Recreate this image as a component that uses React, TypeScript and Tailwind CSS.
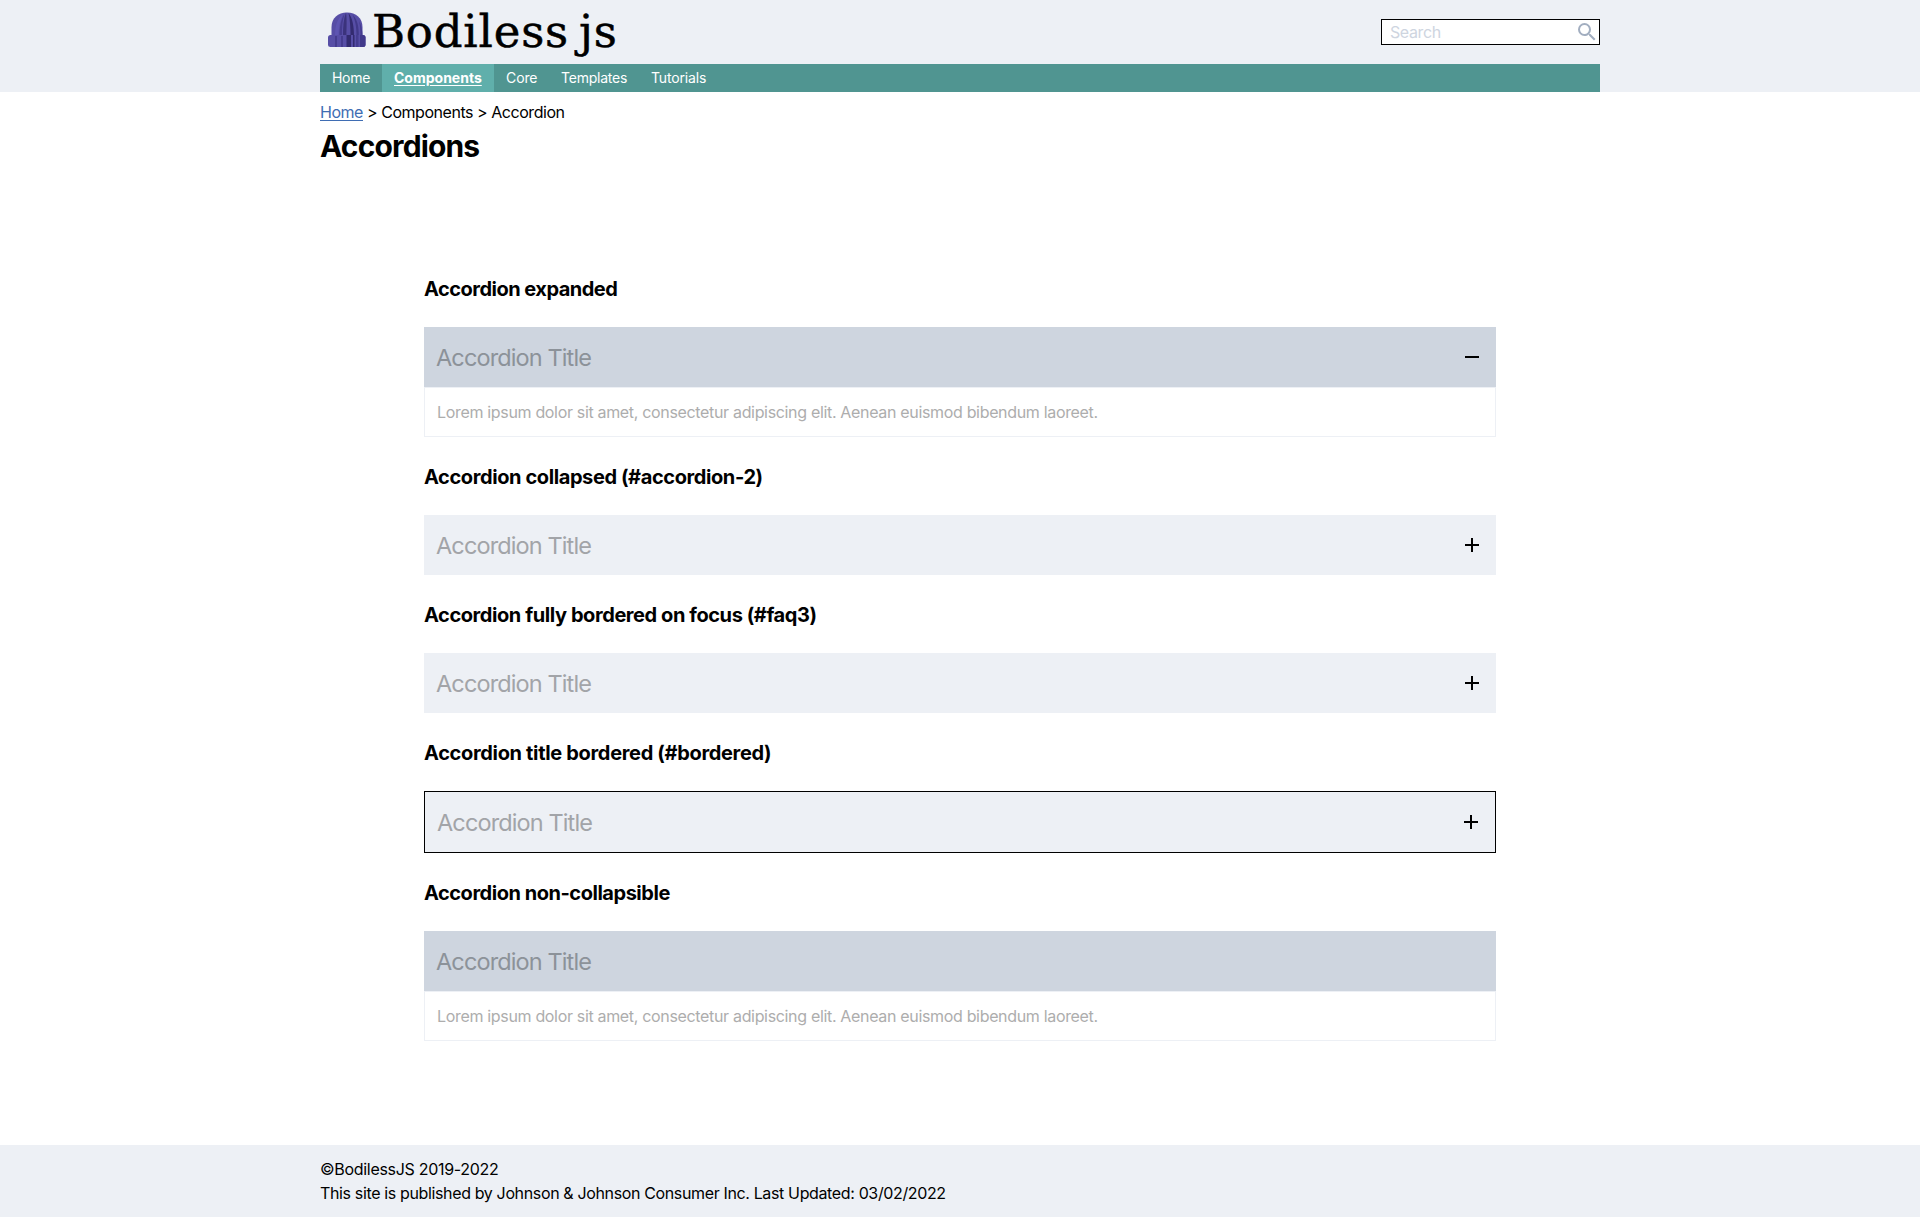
import { MdAdd, MdRemove, MdSearch } from "react-icons/md";

const navItems = [
  { label: "Home", className: "w-[62px] tracking-[-0.3px]" },
  { label: "Components", className: "w-[112px] bg-[#60afab] font-bold underline underline-offset-2" },
  { label: "Core", className: "w-[55px] tracking-[-0.1px]" },
  { label: "Templates", className: "w-[90px] tracking-[-0.22px]" },
  { label: "Tutorials", className: "w-[79px] tracking-[-0.16px]" },
];

const lorem =
  "Lorem ipsum dolor sit amet, consectetur adipiscing elit. Aenean euismod bibendum laoreet.";

type AccordionProps = {
  heading: string;
  headingClass: string;
  open?: boolean;
  bordered?: boolean;
  fixed?: boolean;
};

const accordions: AccordionProps[] = [
  { heading: "Accordion expanded", headingClass: "tracking-[-0.51px]", open: true },
  { heading: "Accordion collapsed (#accordion-2)", headingClass: "tracking-[-0.4px]" },
  { heading: "Accordion fully bordered on focus (#faq3)", headingClass: "tracking-[-0.42px]" },
  { heading: "Accordion title bordered (#bordered)", headingClass: "tracking-[-0.33px]", bordered: true },
  { heading: "Accordion non-collapsible", headingClass: "tracking-[-0.47px]", open: true, fixed: true },
];

function Beanie() {
  return (
    <svg className="mt-[12px] ml-[8px] h-[36px] w-[38px] shrink-0" viewBox="0 0 38 36">
      <path d="M3.500 24V15C3.500 6 10 .4 19 .4S34.500 6 34.500 15v9z" fill="#574ea6" />
      <path d="M7 24c0-10 2-17 8-22-3 6-4.500 13-4.500 22z" fill="#5e55b2" />
      <path d="M15 24c0-9 .5-17 3-23.500 1 6 .6 15 .4 23.500z" fill="#3b337c" />
      <path d="M11.500 24c0-9 1.500-17 5-22-2 6-2.600 13-2.600 22z" fill="#453c8f" />
      <path d="M20.500 1c4 5 5.500 13 5.500 23h-3.500C22.500 15 22 7 20.500 1z" fill="#332b70" />
      <path d="M24.500 2.500c5 5 6.300 12 6.300 21.500h-2.300c0-9-1-15-4-21.500z" fill="#41398a" />
      <path d="M31 9c2 4 3.500 8 3.500 15h-2C32.500 18 32 13 31 9z" fill="#453c8f" />
      <rect x="0" y="23" width="37.500" height="12" rx="2.500" fill="#574ea6" />
      <path d="M7 24h2v11H7zM13 24h2v11h-2zM28 23h2.500v12H28z" fill="#453c8f" />
      <path d="M18.500 23h4.500v12h-4.500zM25 23h1.500v12H25z" fill="#332b70" />
      <path d="M32 23h3a2.500 2.500 0 0 1 2.500 2.500v7A2.500 2.500 0 0 1 35 35h-3z" fill="#41398a" />
    </svg>
  );
}

function Accordion({ heading, headingClass, open, bordered, fixed }: AccordionProps) {
  return (
    <section>
      <h3 className={`mt-[25px] mb-[23px] text-[20px] leading-[30px] font-bold ${headingClass}`}>{heading}</h3>
      <div
        className={`flex items-center justify-between px-3 ${
          bordered ? "h-[62px] border border-black" : "h-[60px]"
        } ${open ? "bg-[#ced5df]" : "bg-[#edf0f5]"}`}
      >
        <span
          className={`pt-[2px] text-[23.500px] leading-9 tracking-[-0.88px] ${open ? "text-[#8c9299]" : "text-[#a2a4a8]"}`}
        >
          Accordion Title
        </span>
        {!fixed && (open ? <MdRemove size={24} /> : <MdAdd size={24} />)}
      </div>
      {open && (
        <div className="border border-[#edf0f5] p-3 text-base leading-6 tracking-[-0.33px] text-[#adadad]">
          {lorem}
        </div>
      )}
    </section>
  );
}

export default function App() {
  return (
    <div className="flex h-[1217px] flex-col bg-white font-['Inter',sans-serif] text-black">
      <header className="bg-[#edf0f5]">
        <div className="mx-auto w-[1280px]">
          <div className="flex h-16 justify-between">
            <div className="flex">
              <Beanie />
              <span className="ml-[6px] pt-[2px] font-['DejaVu_Serif',serif] text-[45px] leading-[60px] tracking-[0.8px] whitespace-nowrap [word-spacing:-5px] [-webkit-text-stroke:0.5px_black]">
                Bodiless js
              </span>
            </div>
            <div className="mt-[19px] flex h-[26px] w-[219px] items-center justify-between border border-black bg-white pl-2 text-base tracking-[-0.4px] text-[#ced5df]">
              <span>Search</span>
              <MdSearch size={24} className="shrink-0 text-[#a2aec0]" />
            </div>
          </div>
          <nav className="flex h-7 bg-[#509591]">
            {navItems.map((item) => (
              <a
                key={item.label}
                className={`flex items-center px-3 text-sm whitespace-nowrap text-white ${item.className}`}
              >
                {item.label}
              </a>
            ))}
          </nav>
        </div>
      </header>

      <main className="mx-auto w-[1280px] grow">
        <div className="mt-2 text-base leading-6 tracking-[-0.46px]">
          <a className="text-[#3f6db3] underline underline-offset-2">Home</a> &gt; Components &gt; Accordion
        </div>
        <h1 className="text-[30px] leading-[45px] font-bold tracking-[-0.85px]">Accordions</h1>
        <div className="mx-auto mt-[105px] w-[1072px]">
          {accordions.map((item) => (
            <Accordion key={item.heading} {...item} />
          ))}
        </div>
      </main>

      <footer className="h-[72px] bg-[#edf0f5]">
        <div className="mx-auto w-[1280px] pt-3 text-base leading-6">
          <p className="tracking-[-0.3px]">©BodilessJS 2019-2022</p>
          <p className="tracking-[-0.36px]">
            This site is published by Johnson &amp; Johnson Consumer Inc. Last Updated: 03/02/2022
          </p>
        </div>
      </footer>
    </div>
  );
}
